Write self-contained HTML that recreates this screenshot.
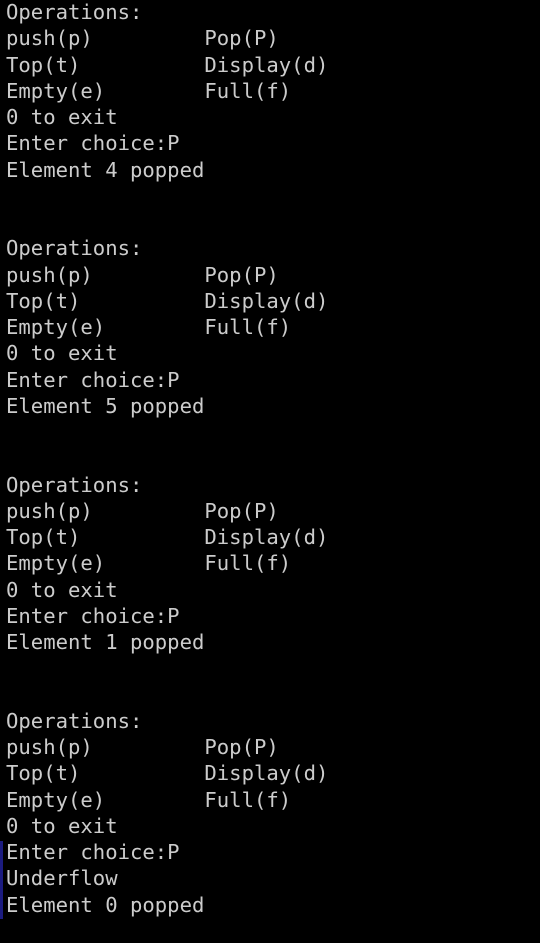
<!DOCTYPE html>
<html><head><style>
html,body{margin:0;padding:0;background:#000;width:540px;height:943px;overflow:hidden}
pre{margin:0;position:absolute;left:6px;top:-1px;font-family:"DejaVu Sans Mono","Liberation Mono",monospace;font-size:20.6px;line-height:26.25px;color:#cccccc}
.bar{position:absolute;left:0;top:841px;width:3px;height:78px;background:#1c1c80}
</style></head><body>
<div class="bar"></div>
<pre>Operations:
push(p)         Pop(P)
Top(t)          Display(d)
Empty(e)        Full(f)
0 to exit
Enter choice:P
Element 4 popped


Operations:
push(p)         Pop(P)
Top(t)          Display(d)
Empty(e)        Full(f)
0 to exit
Enter choice:P
Element 5 popped


Operations:
push(p)         Pop(P)
Top(t)          Display(d)
Empty(e)        Full(f)
0 to exit
Enter choice:P
Element 1 popped


Operations:
push(p)         Pop(P)
Top(t)          Display(d)
Empty(e)        Full(f)
0 to exit
Enter choice:P
Underflow
Element 0 popped</pre>
</body></html>
